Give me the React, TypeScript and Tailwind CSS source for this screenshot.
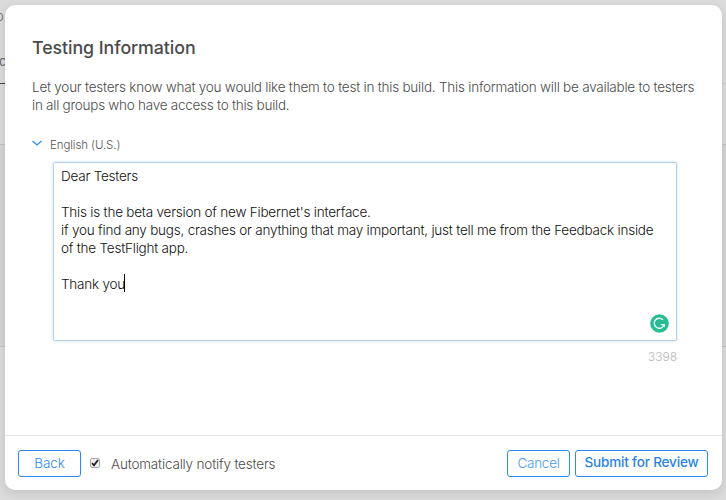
import React from 'react';

const message = [
  'Dear Testers',
  '',
  "This is the beta version of new Fibernet's interface.",
  'if you find any bugs, crashes or anything that may important, just tell me from the Feedback inside',
  'of the TestFlight app.',
  '',
];

function PageBehind() {
  return (
    <div className="absolute inset-0 bg-[#dcdcdc] text-[#666]">
      <div className="absolute top-[8px] -left-[4px] text-[13px] leading-4 font-light">o</div>
      <div className="absolute top-[53px] -left-[1px] text-[13px] leading-4">c</div>
      <div className="absolute top-[83px] left-0 h-px w-full bg-[#cdcdcd]" />
      <div className="absolute top-[83px] left-0 h-px w-[5px] bg-[#444]" />
      <div className="absolute top-[144px] left-0 h-[203px] w-full border-y border-[#c4c4c4] bg-[#d5d5d5]" />
    </div>
  );
}

function GrammarBadge() {
  return (
    <svg className="absolute right-[7px] bottom-[7px] size-[19px]" viewBox="0 0 19 19" fill="none">
      <circle cx="9.5" cy="9.5" r="9.3" fill="#27bd93" />
      <path d="M13 5.9A5 5 0 1 0 14.1 10.6H10.8" stroke="white" strokeWidth="1.3" />
      <path d="M11.4 10H14.8V13.6Z" fill="white" />
    </svg>
  );
}

export default function App() {
  return (
    <div className="relative h-[500px] w-[726px] overflow-hidden p-[5px] font-['Inter','Liberation_Sans',sans-serif]">
      <PageBehind />
      <section className="relative flex h-[485px] w-[717px] flex-col rounded-[10px] bg-white shadow-[0_3px_12px_rgba(0,0,0,0.12)]">
        <div className="flex h-[430px] flex-col pr-[45px] pl-[27px]">
          <h1 className="mt-[31px] text-[17.8px] leading-6 font-medium tracking-[-0.06px] whitespace-nowrap text-[#4b4b4b]">Testing Information</h1>
          <div className="mt-[18px] text-[13.5px] leading-[18px] font-light tracking-[-0.23px] whitespace-nowrap text-[#4c4c4c]">
            <p>Let your testers know what you would like them to test in this build. This information will be available to testers</p>
            <p className="tracking-[-0.26px]">in all groups who have access to this build.</p>
          </div>
          <div className="mt-[22px] flex h-[18px] items-center">
            <svg className="-mt-[4px] h-[7px] w-[10px]" viewBox="0 0 10 7" fill="none">
              <path d="M0.5 1L5 5L9.5 1" stroke="#2b8af0" strokeWidth="1.3" />
            </svg>
            <span className="ml-[8px] text-[11.5px] leading-[18px] font-light tracking-[-0.1px] text-[#555]">English (U.S.)</span>
          </div>
          <div className="relative mt-[8px] ml-[21px] h-[179px] w-[624px] rounded-[2px] border border-[#b8d0e3] pt-[4px] pl-[7px] text-[13.5px] leading-[18px] font-light tracking-[-0.22px] whitespace-nowrap text-[#111] shadow-[0_0_3px_rgba(120,180,225,0.45)]">
            {message.map((line, i) => (
              <p key={i} className="h-[18px]">{line}</p>
            ))}
            <p className="flex h-[18px]">
              <span>Thank you</span>
              <span className="-mt-px -ml-px h-[18px] w-px bg-black" />
            </p>
            <GrammarBadge />
          </div>
          <p className="mt-[7px] text-right text-[12px] leading-[18px] font-light text-[#b8b8b8]">3398</p>
        </div>
        <footer className="flex h-[55px] items-center border-t border-[#e4e4e4] pr-[14px] pl-[13px]">
          <button className="h-[27px] w-[63px] rounded-[3px] border border-[#2b8af0] pb-px text-[13.5px] leading-[18px] font-light tracking-[-0.1px] text-[#2b8af0]">Back</button>
          <span className="ml-[9px] flex size-[10px] items-center justify-center rounded-[2px] border border-[#aaa] bg-[#eee]">
            <svg className="size-[8px]" viewBox="0 0 8 8" fill="none">
              <path d="M1 4.2L3 6.3L7 1" stroke="#222" strokeWidth="1.8" />
            </svg>
          </span>
          <span className="mt-[2px] ml-[11px] text-[13.5px] leading-[18px] font-light tracking-[-0.18px] whitespace-nowrap text-[#4c4c4c]">Automatically notify testers</span>
          <button className="ml-auto h-[27px] w-[63px] rounded-[3px] border border-[#2b8af0] pb-px text-[13.5px] leading-[18px] font-light tracking-[-0.25px] text-[#4c99ee]">Cancel</button>
          <button className="ml-[5px] h-[27px] w-[133px] rounded-[3px] border border-[#2b8af0] pb-[3px] text-[13.5px] leading-[18px] font-medium tracking-[-0.16px] whitespace-nowrap text-[#2783e6]">Submit for Review</button>
        </footer>
      </section>
    </div>
  );
}
